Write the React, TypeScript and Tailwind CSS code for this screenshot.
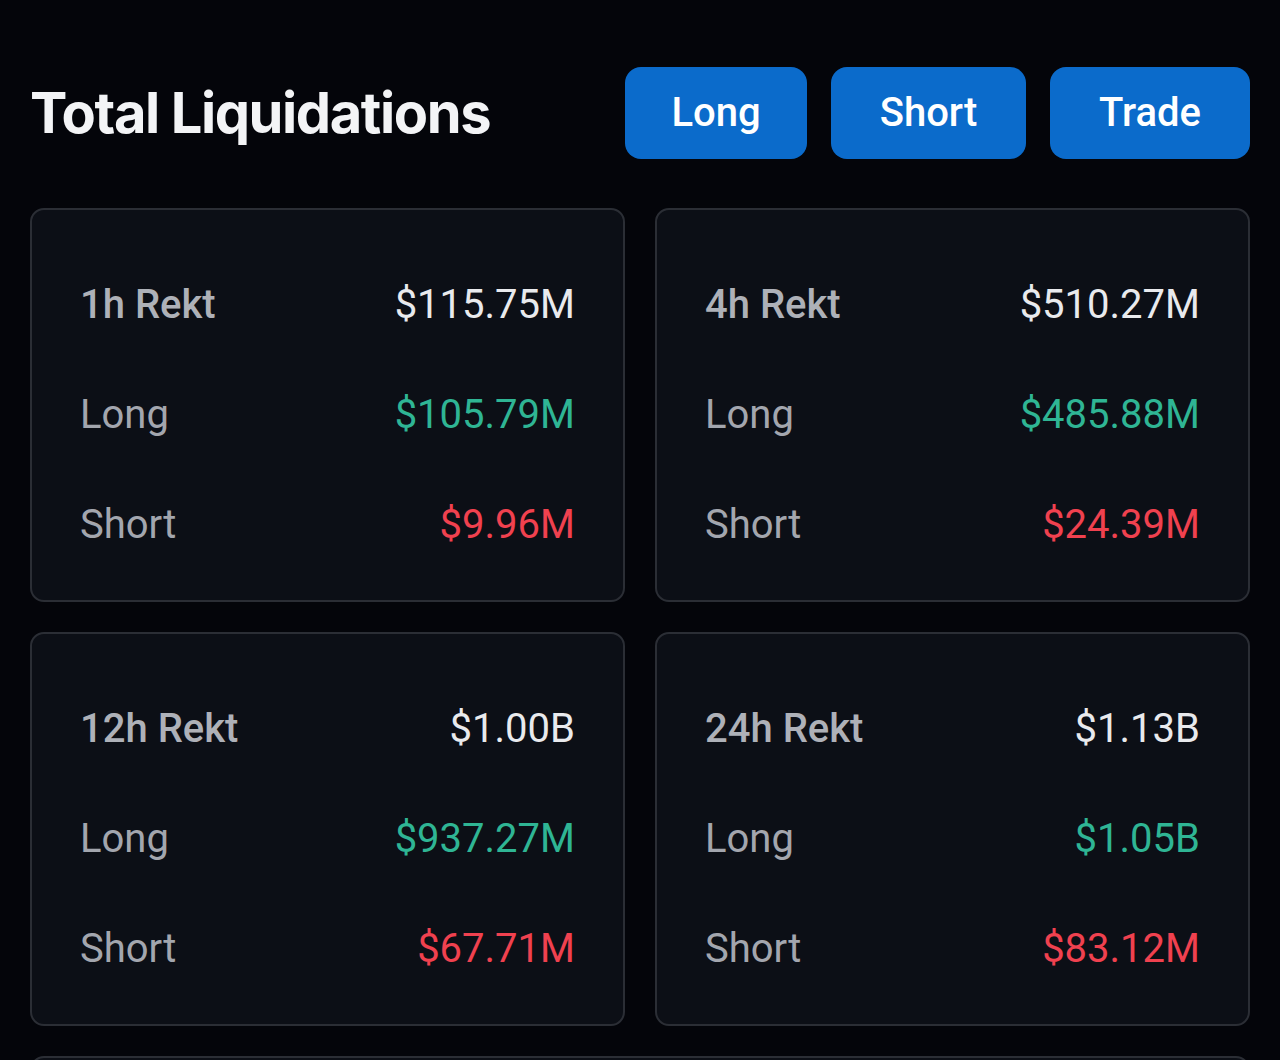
import React from "react";

type Stat = {
  label: string;
  total: string;
  long: string;
  short: string;
};

const STATS: Stat[] = [
  { label: "1h Rekt", total: "$115.75M", long: "$105.79M", short: "$9.96M" },
  { label: "4h Rekt", total: "$510.27M", long: "$485.88M", short: "$24.39M" },
  { label: "12h Rekt", total: "$1.00B", long: "$937.27M", short: "$67.71M" },
  { label: "24h Rekt", total: "$1.13B", long: "$1.05B", short: "$83.12M" },
];

const BUTTONS = [
  { label: "Long", width: "w-[182px]" },
  { label: "Short", width: "w-[195px]" },
  { label: "Trade", width: "w-[200px]" },
];

function StatCard({ stat }: { stat: Stat }) {
  return (
    <div className="rounded-[14px] border-2 border-[#2b2e35] bg-[#0c0f16] px-[48px] pt-[70px] pb-[50px]">
      <div className="flex flex-col gap-[60px] text-[40px] leading-[50px]">
        <div className="flex items-center justify-between">
          <span className="font-medium text-[#aeb1b8]">{stat.label}</span>
          <span className="text-[#e9eaed]">{stat.total}</span>
        </div>
        <div className="flex items-center justify-between">
          <span className="text-[#a3a6ae]">Long</span>
          <span className="text-[#2fb594]">{stat.long}</span>
        </div>
        <div className="flex items-center justify-between">
          <span className="text-[#a3a6ae]">Short</span>
          <span className="text-[#f0414f]">{stat.short}</span>
        </div>
      </div>
    </div>
  );
}

export default function App() {
  return (
    <div className="h-[1060px] overflow-hidden bg-[#04050a] px-[30px] pt-[67px] font-['Roboto',sans-serif]">
      <div className="flex items-center justify-between">
        <h1 className="font-['Inter',sans-serif] text-[56px] font-bold tracking-[-0.025em] text-[#f3f4f6]">
          Total Liquidations
        </h1>
        <div className="flex gap-[24px]">
          {BUTTONS.map((b) => (
            <button
              key={b.label}
              className={`${b.width} h-[92px] rounded-[16px] bg-[#0b6bcb] text-[40px] font-medium text-white`}
            >
              {b.label}
            </button>
          ))}
        </div>
      </div>

      <div className="mt-[49px] grid grid-cols-2 gap-[30px]">
        {STATS.map((s) => (
          <StatCard key={s.label} stat={s} />
        ))}
      </div>

      <div className="mt-[30px] h-[300px] rounded-[14px] border-2 border-[#2b2e35] bg-[#0c0f16]" />
    </div>
  );
}
